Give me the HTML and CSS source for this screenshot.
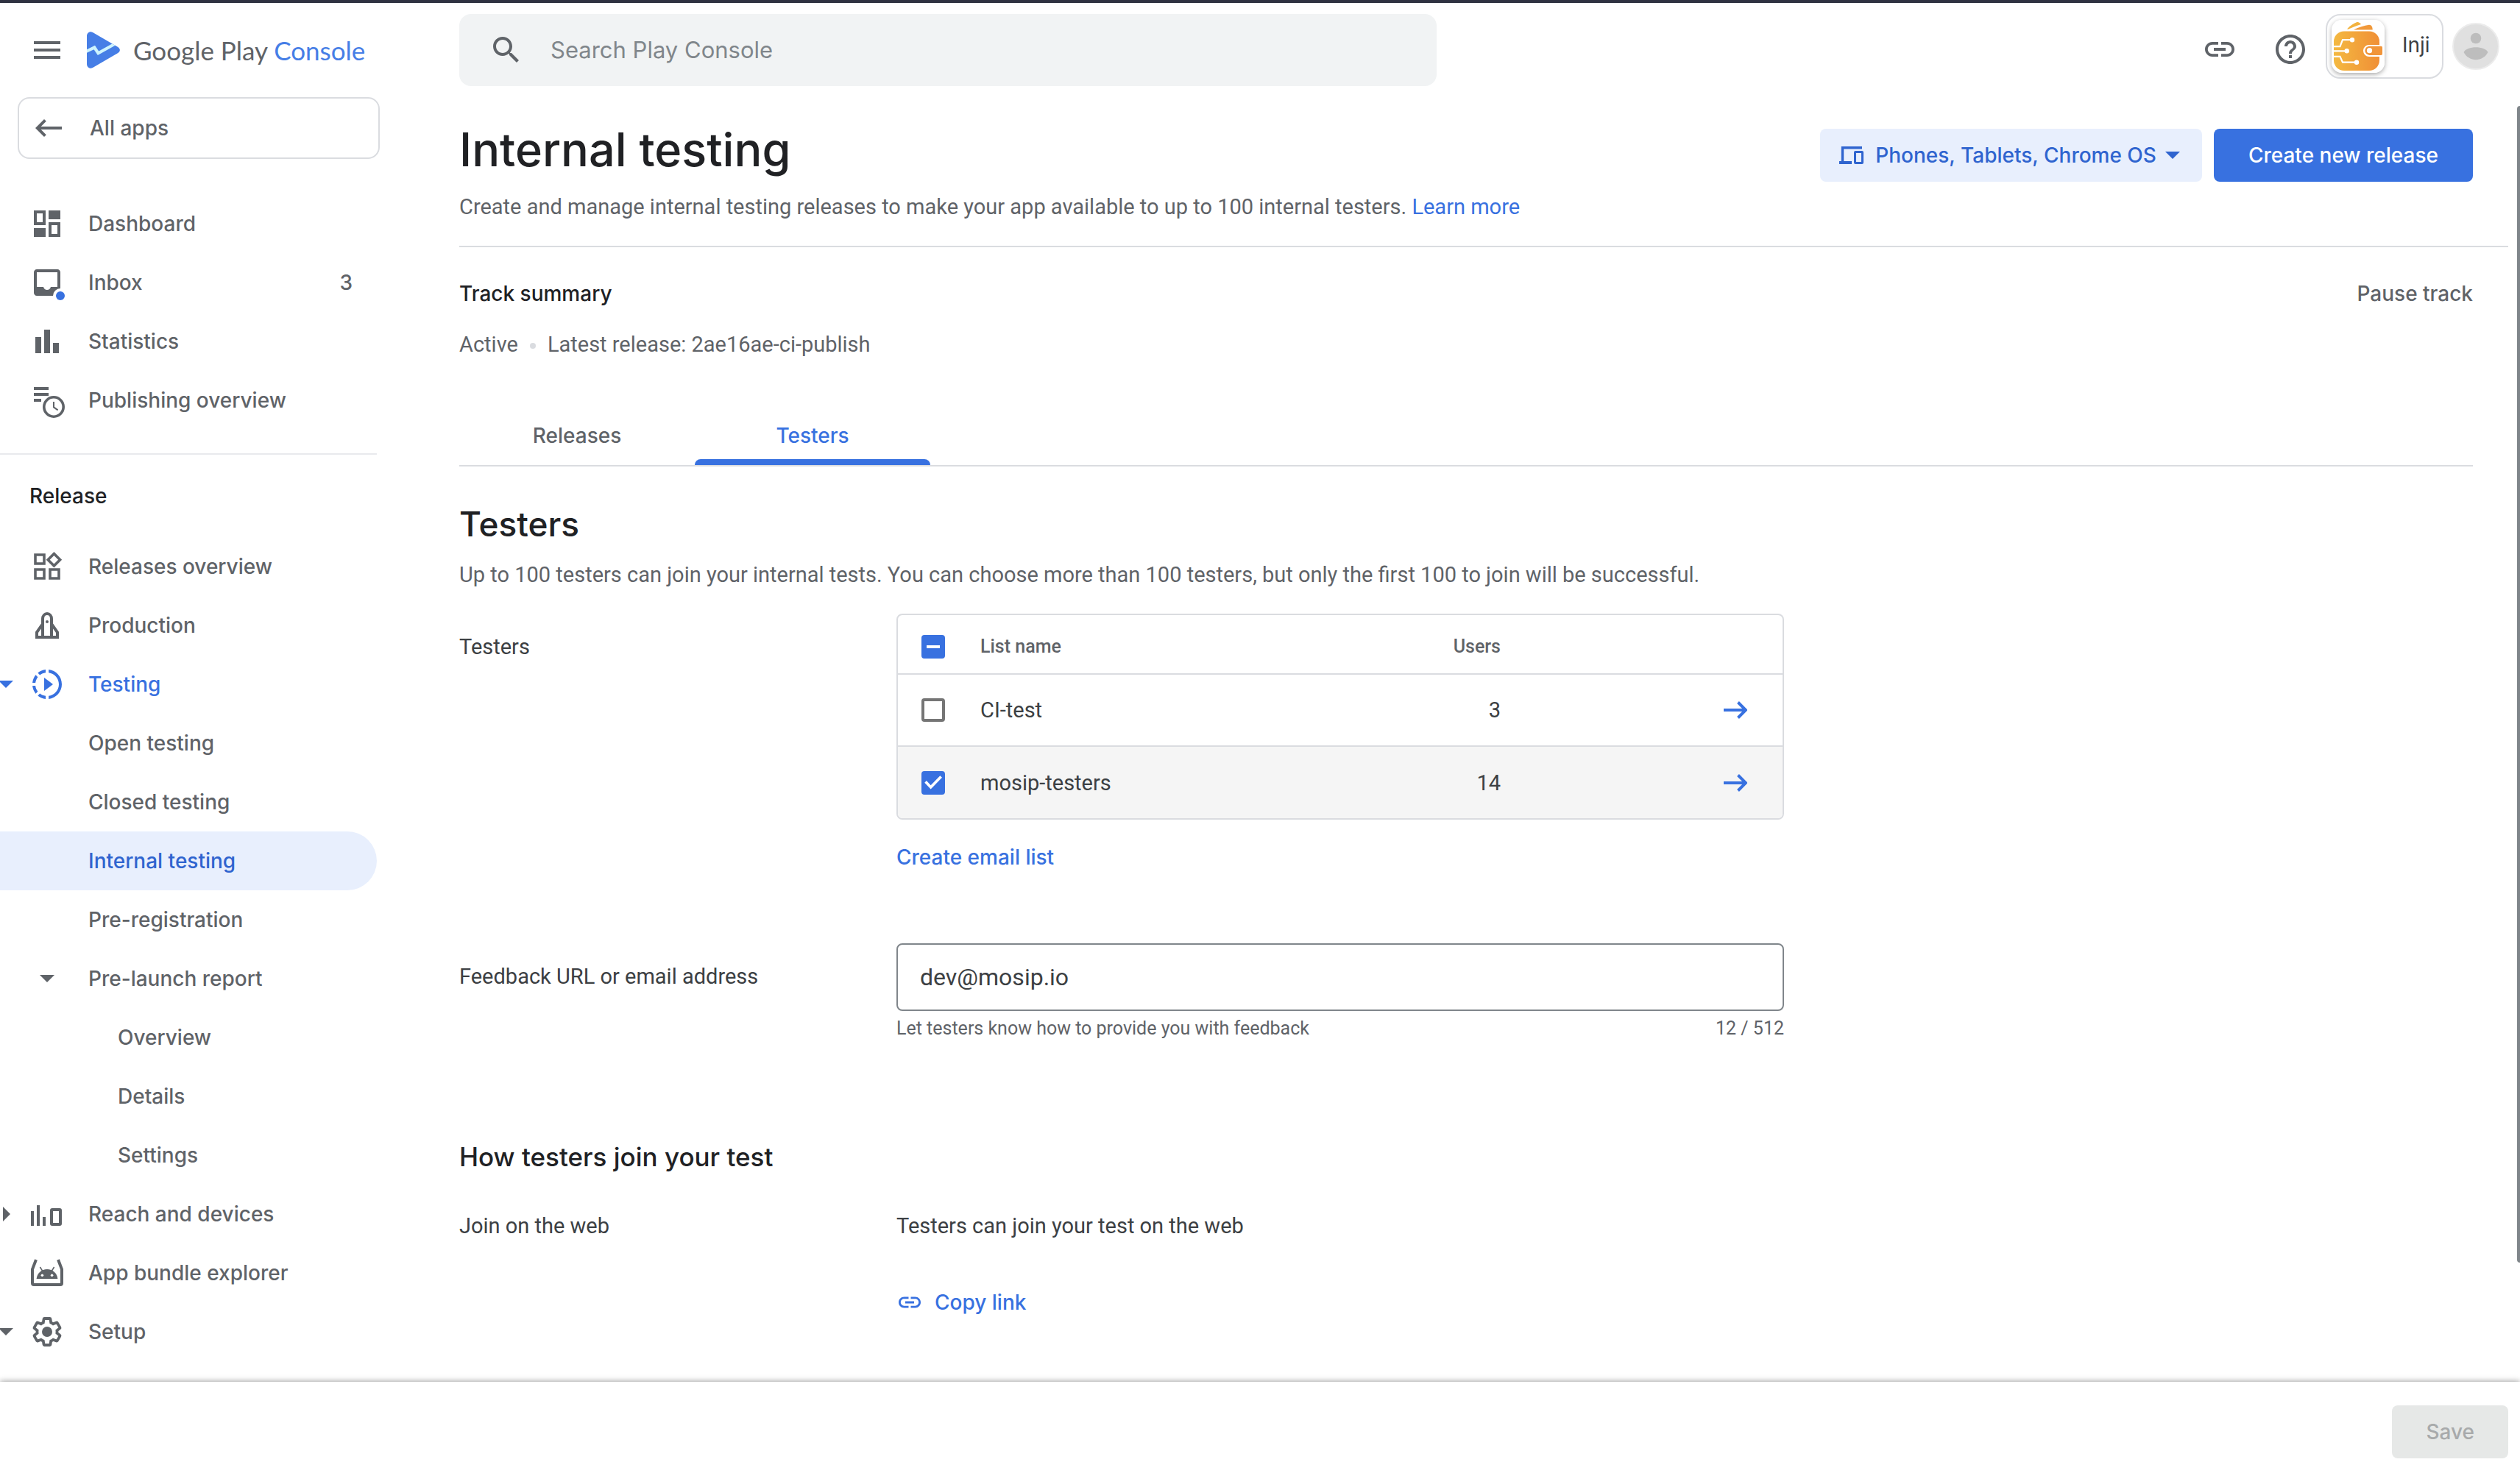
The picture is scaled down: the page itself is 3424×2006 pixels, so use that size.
FILE: index.html
```html
<!DOCTYPE html>
<html lang="en">
<head>
<meta charset="utf-8">
<meta name="viewport" content="width=device-width, initial-scale=1">
<title>Internal testing | Google Play Console</title>
<link rel="stylesheet" href="styles.css">
</head>
<body>
<svg class="sprite" aria-hidden="true">
  <symbol id="link" viewBox="0 0 24 24"><path d="M3.9 12c0-1.71 1.39-3.1 3.1-3.1h4V7H7c-2.76 0-5 2.24-5 5s2.24 5 5 5h4v-1.9H7c-1.71 0-3.1-1.39-3.1-3.1zM8 13h8v-2H8v2zm9-6h-4v1.9h4c1.71 0 3.100 1.390 3.100 3.100s-1.390 3.100-3.100 3.100h-4V17h4c2.760 0 5-2.240 5-5s-2.240-5-5-5z"/></symbol>
  <symbol id="down" viewBox="0 0 20 20"><path d="M0 5h20L10 15z"/></symbol>
  <symbol id="right" viewBox="0 0 20 20"><path d="M6 0l10 10L6 20z"/></symbol>
  <symbol id="forward" viewBox="0 0 32 24"><path d="M0 12h29M19.500 1.500L30 12 19.500 22.500" fill="none" stroke="currentColor" stroke-width="4"/></symbol>
</svg>

<div class="top-strip"></div>

<header class="header">
  <div class="brand">
    <button class="icon-button" type="button" aria-label="Menu">
      <svg class="icon" viewBox="0 0 24 24"><path d="M3 6h18v2H3zm0 5h18v2H3zm0 5h18v2H3z"/></svg>
    </button>
    <a class="logo" href="#">
      <svg class="logo-mark" viewBox="0 0 45 50">
        <clipPath id="mark"><path d="M0 6C0 1.500 4 -1.200 8 1L41.500 20.400C46 23 46 27 41.500 29.600L8 49C4 51.200 0 48.500 0 44z"/></clipPath>
        <g clip-path="url(#mark)"><path fill="#467ee6" d="M0 0h45v50H0z"/><path d="M-2 27.500L10.300 21.500 15.500 29.300 42 14.500" fill="none" stroke="#cdf3fd" stroke-width="4.200"/></g>
      </svg>
      <span class="logo-text">Google Play <span class="logo-accent">Console</span></span>
    </a>
  </div>
  <label class="search">
    <svg class="icon" viewBox="0 0 24 24" aria-hidden="true"><path d="M15.500 14h-.79l-.28-.27C15.410 12.590 16 11.110 16 9.500 16 5.910 13.090 3 9.500 3S3 5.910 3 9.500 5.910 16 9.500 16c1.610 0 3.090-.59 4.230-1.570l.27.28v.79l5 4.990L20.490 19l-4.990-5zm-6 0C7.010 14 5 11.990 5 9.500S7.010 5 9.500 5 14 7.010 14 9.500 11.990 14 9.500 14z"/></svg>
    <input class="search-input" type="search" placeholder="Search Play Console" aria-label="Search Play Console">
  </label>
  <div class="account">
    <div class="account-tools">
      <button class="icon-button" type="button" aria-label="Copy page link"><svg class="icon"><use href="#link"/></svg></button>
      <button class="icon-button" type="button" aria-label="Help"><svg class="icon" viewBox="0 0 24 24"><path d="M11 18h2v-2h-2v2zm1-16C6.480 2 2 6.480 2 12s4.480 10 10 10 10-4.480 10-10S17.520 2 12 2zm0 18c-4.410 0-8-3.590-8-8s3.590-8 8-8 8 3.590 8 8-3.590 8-8 8zm0-14c-2.210 0-4 1.790-4 4h2c0-1.100.9-2 2-2s2 .9 2 2c0 2-3 1.750-3 5h2c0-2.250 3-2.500 3-5 0-2.210-1.790-4-4-4z"/></svg></button>
    </div>
    <button class="app-chip" type="button">
      <svg class="app-tile" viewBox="0 0 72 72">
        <defs><linearGradient id="amber"><stop offset="0" stop-color="#f4b941"/><stop offset="1" stop-color="#f08f36"/></linearGradient></defs>
        <rect width="72" height="72" fill="#fff"/>
        <path fill="#f3b23e" d="M21 12.500C25 8 30 5 34 3.300c2.500-.8 4.500 1 6 2.700C33 8 27 11 22.500 12.800z"/>
        <path fill="#f1993a" d="M30 13.400C37 10 44 8 51 6.800c3.500 0 4.500 3 4.700 6.600z"/>
        <rect x="3" y="15.500" width="62" height="53.500" rx="14" fill="url(#amber)"/>
        <path fill="#fff" d="M69 34H51a7.800 7.800 0 0 0 0 16h18z"/>
        <path fill="#f1953a" d="M67 35.700H51.500a6 6 0 0 0 0 12.200H67c1.500 0 2-.8 2-2V37.700c0-1.200-.5-2-2-2z"/>
        <path d="M2 36.200h9.500L15 27.200h12M2 42.300h17M2 49.800h9.500L15 57.700h18" fill="none" stroke="#fff" stroke-width="2.200"/>
        <g fill="#fff"><circle cx="28" cy="27.200" r="3.200"/><circle cx="20.700" cy="42.300" r="3.200"/><circle cx="34" cy="57.700" r="3.200"/><circle cx="51.500" cy="41.700" r="3.600"/></g>
      </svg>
      <span class="app-name">Inji</span>
    </button>
    <button class="avatar" type="button" aria-label="Account">
      <svg class="avatar-art" viewBox="0 0 64 64"><circle cx="32" cy="32" r="31" fill="#e0e0e0" stroke="#ececec" stroke-width="2"/><circle cx="32" cy="21" r="7.300" fill="#bdbdbd"/><path fill="#bdbdbd" d="M15.500 40c4-9 29-9 33 0-7 13.500-26 13.500-33 0z"/></svg>
    </button>
  </div>
</header>

<div class="shell">
  <nav class="sidebar" aria-label="Main">
    <a class="all-apps" href="#">
      <svg class="icon" viewBox="0 0 24 24"><path d="M22 11H7.830l3.580-3.590L10 6l-6 6 6 6 1.410-1.410L7.830 13H22z"/></svg>
      <span>All apps</span>
    </a>

    <a class="item" href="#"><svg class="icon" viewBox="0 0 24 24"><path fill-rule="evenodd" d="M3 3h8v10H3zM5 5v6h4V5zM13 3h8v6h-8zM3 15h8v6H3zM13 11h8v10h-8zM15 13v6h4v-6z"/></svg><span class="label">Dashboard</span></a>
    <a class="item" href="#"><svg class="icon" viewBox="0 0 24 24"><path d="M19 3H5c-1.100 0-2 .9-2 2v14c0 1.100.9 2 2 2h14c1.100 0 2-.9 2-2V5c0-1.100-.9-2-2-2zm0 12h-4.500c-.4 1.300-1.300 2-2.500 2s-2.100-.7-2.500-2H5V5h14v10z"/><circle cx="21" cy="21" r="5" fill="#fff"/><circle cx="21" cy="21" r="3" fill="#3871e0"/></svg><span class="label">Inbox</span><span class="count">3</span></a>
    <a class="item" href="#"><svg class="icon" viewBox="0 0 24 24"><path d="M4 9h4v11H4zM10 4h4v16h-4zM16 13h4v7h-4z"/></svg><span class="label">Statistics</span></a>
    <a class="item" href="#"><svg class="icon" viewBox="0 0 24 24"><path d="M3 3h10v2H3zM3 7h10v2H3zM3 11h5v2H3z"/><circle cx="16.500" cy="16.500" r="8" fill="#fff"/><path d="M13 7v2H3V7z"/><circle cx="16.500" cy="16.500" r="6.600" fill="#fff" stroke="currentColor" stroke-width="1.800"/><path d="M16.500 13v3.700l2.800 2" fill="none" stroke="currentColor"/></svg><span class="label">Publishing overview</span></a>

    <h2 class="section">Release</h2>

    <a class="item" href="#"><svg class="icon" viewBox="0 0 24 24"><path d="M4 4h6v6H4zM4 14h6v6H4zM14 14h6v6h-6zM16.700 3.300l4.100 4.100-4.100 4.100-4.100-4.100z" fill="none" stroke="currentColor" stroke-width="1.800"/></svg><span class="label">Releases overview</span></a>
    <a class="item" href="#"><svg class="icon" viewBox="0 0 24 24"><path d="M9 20V7.500C9 5.500 10.300 4 12 4s3 1.500 3 3.500V20M9 11l-4 5.700V20h14v-3.300L15 11" fill="none" stroke="currentColor" stroke-width="2"/><circle cx="12" cy="9.500" r="1"/></svg><span class="label">Production</span></a>
    <a class="item item-active" href="#"><svg class="caret"><use href="#down"/></svg><svg class="icon" viewBox="0 0 24 24"><path d="M13.050 9.790L10 7.500v9l3.050-2.290L16 12zM11 4.070V2.050c-2.010.2-3.840 1-5.320 2.210L7.100 5.690c1.110-.86 2.440-1.440 3.900-1.620zM5.690 7.100L4.260 5.680C3.050 7.160 2.250 8.990 2.050 11h2.020c.18-1.460.76-2.790 1.620-3.900zM4.070 13H2.050c.2 2.010 1 3.840 2.210 5.320l1.430-1.430c-.86-1.100-1.440-2.430-1.620-3.890zM5.680 19.740C7.160 20.950 9 21.750 11 21.950v-2.020c-1.460-.18-2.790-.76-3.900-1.620l-1.420 1.430zM22 12c0 5.160-3.920 9.420-8.950 9.950v-2.020C16.970 19.410 20 16.050 20 12s-3.030-7.410-6.950-7.930V2.050C18.080 2.580 22 6.840 22 12z"/></svg><span class="label">Testing</span></a>
    <a class="item" href="#"><span class="label">Open testing</span></a>
    <a class="item" href="#"><span class="label">Closed testing</span></a>
    <a class="item item-current" href="#" aria-current="page"><span class="label">Internal testing</span></a>
    <a class="item" href="#"><span class="label">Pre-registration</span></a>
    <a class="item" href="#"><svg class="caret caret-inner"><use href="#down"/></svg><span class="label">Pre-launch report</span></a>
    <a class="item item-nested" href="#"><span class="label">Overview</span></a>
    <a class="item item-nested" href="#"><span class="label">Details</span></a>
    <a class="item item-nested" href="#"><span class="label">Settings</span></a>
    <a class="item" href="#"><svg class="caret"><use href="#right"/></svg><svg class="icon" viewBox="0 0 24 24"><path d="M1 10h2v10H1zM5 6h2v14H5zM9 14h2v6H9z"/><rect x="15" y="9" width="6" height="10" rx=".5" fill="none" stroke="currentColor" stroke-width="2"/></svg><span class="label">Reach and devices</span></a>
    <a class="item" href="#"><svg class="icon" viewBox="0 0 24 24"><path d="M4.500 3L2 9.500V19a1 1 0 0 0 1 1h18a1 1 0 0 0 1-1V9.500L19.500 3" fill="none" stroke="currentColor" stroke-width="2"/><path d="M4.800 16c.4-3.800 3.400-6.500 7.200-6.500s6.800 2.700 7.200 6.500z"/><path d="M7.200 8l1.600 2.600M16.800 8l-1.600 2.600" stroke="currentColor" stroke-width=".8"/><g fill="#fff"><circle cx="8.700" cy="13.600" r=".9"/><circle cx="15.300" cy="13.600" r=".9"/></g></svg><span class="label">App bundle explorer</span></a>
    <a class="item" href="#"><svg class="caret"><use href="#down"/></svg><svg class="icon" viewBox="0 0 24 24"><g transform="translate(1.200 1.200) scale(.9)"><path fill="none" stroke="currentColor" stroke-width="2.100" d="M19.430 12.980c.04-.32.07-.64.07-.98 0-.34-.03-.66-.07-.98l2.110-1.650c.19-.15.24-.42.12-.64l-2-3.460c-.09-.16-.26-.25-.44-.25-.06 0-.12.01-.17.03l-2.490 1c-.52-.4-1.080-.73-1.690-.98l-.38-2.650C14.460 2.180 14.250 2 14 2h-4c-.25 0-.46.18-.49.42l-.38 2.650c-.61.25-1.170.59-1.690.98l-2.490-1c-.06-.02-.12-.03-.18-.03-.17 0-.34.09-.43.25l-2 3.460c-.13.22-.07.49.12.64l2.110 1.650c-.04.32-.07.65-.07.98 0 .33.03.66.07.98l-2.110 1.650c-.19.15-.24.42-.12.64l2 3.460c.09.16.26.25.44.25.06 0 .12-.01.17-.03l2.490-1c.52.4 1.080.73 1.690.98l.38 2.650c.03.24.24.42.49.42h4c.25 0 .46-.18.49-.42l.38-2.650c.61-.25 1.170-.59 1.690-.98l2.490 1c.06.02.12.03.18.03.17 0 .34-.09.43-.25l2-3.460c.12-.22.07-.49-.12-.64l-2.110-1.650z"/></g><circle cx="12" cy="12" r="3.500"/></svg><span class="label">Setup</span></a>
  </nav>

  <main class="main">
    <div class="title-row">
      <div>
        <h1 class="title">Internal testing</h1>
        <p class="text intro">Create and manage internal testing releases to make your app available to up to 100 internal testers. <a class="link" href="#">Learn more</a></p>
      </div>
      <div class="actions">
        <button class="button button-tonal" type="button" aria-haspopup="listbox">
          <svg class="devices" viewBox="0 0 33 24"><path d="M31 1.700H4.500V20" fill="none" stroke="currentColor" stroke-width="3.400"/><path d="M0 20h17v4H0z"/><rect x="21.500" y="7.500" width="10" height="15" rx=".5" fill="none" stroke="currentColor" stroke-width="3"/></svg>
          <span>Phones, Tablets, Chrome OS</span>
          <svg class="menu-caret"><use href="#down"/></svg>
        </button>
        <button class="button button-primary" type="button">Create new release</button>
      </div>
    </div>

    <div class="body">
      <div class="track-row">
        <h2 class="track-title">Track summary</h2>
        <button class="text-button" type="button">Pause track</button>
      </div>
      <p class="text status"><span>Active</span><span class="dot"></span><span>Latest release: 2ae16ae-ci-publish</span></p>

      <div class="tabs" role="tablist">
        <button class="tab" type="button" role="tab" aria-selected="false">Releases</button>
        <button class="tab tab-selected" type="button" role="tab" aria-selected="true">Testers</button>
      </div>

      <h2 class="subtitle">Testers</h2>
      <p class="text">Up to 100 testers can join your internal tests. You can choose more than 100 testers, but only the first 100 to join will be successful.</p>

      <section class="form-row lists-row">
        <div class="form-label">Testers</div>
        <div>
          <div class="table-frame">
            <table class="lists">
              <thead>
                <tr><th class="col-check"><input class="check check-mixed" type="checkbox" aria-label="Select all lists"></th><th class="col-name">List name</th><th class="col-users">Users</th><th class="col-go"></th></tr>
              </thead>
              <tbody>
                <tr><td><input class="check" type="checkbox" aria-label="CI-test"></td><td>CI-test</td><td class="col-users">3</td><td class="col-go"><a class="go" href="#" aria-label="Open CI-test"><svg class="arrow"><use href="#forward"/></svg></a></td></tr>
                <tr class="row-selected"><td><input class="check" type="checkbox" aria-label="mosip-testers" checked></td><td>mosip-testers</td><td class="col-users">14</td><td class="col-go"><a class="go" href="#" aria-label="Open mosip-testers"><svg class="arrow"><use href="#forward"/></svg></a></td></tr>
              </tbody>
            </table>
          </div>
          <button class="text-button blue create-list" type="button">Create email list</button>
        </div>
      </section>

      <section class="form-row feedback-row">
        <label class="form-label" for="feedback">Feedback URL or email address</label>
        <div>
          <input class="field" id="feedback" type="text" value="dev@mosip.io" aria-describedby="feedback-hint">
          <div class="hint"><span id="feedback-hint">Let testers know how to provide you with feedback</span><span>12 / 512</span></div>
        </div>
      </section>

      <h3 class="join-title">How testers join your test</h3>
      <section class="form-row join-row">
        <div>Join on the web</div>
        <div>
          <p class="join-text">Testers can join your test on the web</p>
          <button class="text-button blue copy" type="button"><svg class="copy-icon"><use href="#link"/></svg><span>Copy link</span></button>
        </div>
      </section>
    </div>
  </main>
</div>

<footer class="footer"><button class="button button-save" type="button" disabled>Save</button></footer>
<div class="scroll-thumb"></div>
</body>
</html>
```

FILE: styles.css
```css
:root {
  --blue: #3871e0;
  --blue-dark: #2f64cf;
  --blue-tint: #e8effd;
  --ink: #202124;
  --body: #3c4043;
  --grey: #5f6368;
  --line: #dadce0;
  --sans: Inter, "Open Sans", sans-serif;
  --text: Roboto, "Liberation Sans", sans-serif;
}

* { box-sizing: border-box; }

body {
  margin: 0;
  min-height: 100vh;
  display: flex;
  flex-direction: column;
  background: #fff;
  color: var(--body);
  font: 400 29px/40px var(--text);
}

h1, h2, h3, p { margin: 0; }
a { color: inherit; text-decoration: none; }
button { padding: 0; border: 0; background: none; color: inherit; font: 500 28px/40px var(--sans); }
svg { display: block; flex: none; fill: currentColor; }

.sprite { position: absolute; width: 0; height: 0; }
.icon { width: 48px; height: 48px; }
.icon-button { color: var(--grey); }
.top-strip { height: 4px; background: #2f3241; }

/* Header */
.header {
  display: grid;
  grid-template-columns: 624px minmax(0, 1328px) 1fr;
  align-items: start;
  padding: 15px 28px 15px 0;
}
.brand { display: flex; align-items: center; height: 98px; padding-left: 40px; gap: 30px; }
.logo { display: flex; align-items: center; gap: 18px; }
.logo-mark { width: 45px; height: 50px; }
.logo-text { font: 400 35px/48px Lato, sans-serif; color: var(--grey); }
.logo-accent { color: #467ee6; }

.search {
  display: flex;
  align-items: center;
  height: 98px;
  padding: 0 40px;
  gap: 36px;
  border-radius: 16px;
  background: #f1f3f4;
  color: var(--grey);
}
.search-input {
  flex: 1;
  min-width: 0;
  padding: 0;
  border: 0;
  outline: 0;
  background: none;
  color: var(--body);
  font: 400 31px/48px var(--sans);
}
.search-input::placeholder { color: #80868b; opacity: 1; }

.account { display: flex; justify-content: flex-end; align-items: center; height: 88px; }
.account-tools { display: flex; gap: 48px; padding-top: 8px; margin-right: 24px; }
.app-chip {
  display: flex;
  gap: 24px;
  width: 160px;
  height: 88px;
  padding: 6px;
  border: 2px solid var(--line);
  border-radius: 20px;
  margin-right: 12px;
}
.app-tile { width: 72px; height: 72px; border-radius: 14px; box-shadow: 0 2px 6px rgba(0, 0, 0, .35); }
.app-name { padding-top: 14px; font-weight: 400; color: var(--body); }
.avatar-art { width: 64px; height: 64px; }

/* Layout */
.shell { display: grid; grid-template-columns: 624px minmax(0, 1fr); }

/* Sidebar */
.sidebar { padding-bottom: 28px; color: var(--grey); font: 500 28px/40px var(--sans); }
.all-apps {
  display: flex;
  align-items: center;
  gap: 34px;
  width: 492px;
  height: 84px;
  margin: 0 0 48px 24px;
  padding-left: 14px;
  border: 2px solid var(--line);
  border-radius: 16px;
}
.item {
  display: grid;
  grid-template-columns: 40px 48px 32px 1fr auto;
  align-items: center;
  width: 512px;
  height: 80px;
  padding-right: 33px;
}
.item > * { grid-row: 1; }
.item .icon { grid-column: 2; }
.caret { grid-column: 1; width: 20px; height: 20px; margin-left: -2px; }
.caret-inner { grid-column: 2; margin-left: 0; justify-self: center; }
.label { grid-column: 4; white-space: nowrap; }
.count { grid-column: 5; }
.item-nested { padding-left: 40px; }
.item-active { color: var(--blue); }
.item-current { border-radius: 0 40px 40px 0; background: var(--blue-tint); color: var(--blue-dark); }
.section {
  width: 512px;
  margin-top: 32px;
  padding: 36px 40px;
  border-top: 2px solid #e8eaed;
  color: var(--ink);
  font: 500 28px/40px var(--sans);
}

/* Page content */
.title-row {
  display: flex;
  justify-content: space-between;
  margin-right: 16px;
  padding: 35px 48px 33px 0;
  border-bottom: 2px solid var(--line);
}
.title { color: var(--ink); font: 500 63px/72px var(--sans); }
.text { color: var(--grey); }
.intro { margin-top: 22px; }
.link { color: var(--blue); }
.actions { display: flex; gap: 16px; padding-top: 8px; }
.button { height: 72px; border-radius: 8px; white-space: nowrap; }
.button-tonal {
  display: flex;
  align-items: center;
  padding: 0 30px 0 26px;
  background: var(--blue-tint);
  color: var(--blue-dark);
}
.devices { width: 33px; height: 24px; margin-right: 16px; }
.menu-caret { width: 20px; height: 20px; margin-left: 12px; }
.button-primary { padding: 0 47px; background: var(--blue); color: #fff; }

.body { padding: 43px 64px 0 0; }
.track-row { display: flex; justify-content: space-between; color: var(--grey); }
.track-title { color: var(--ink); font: 500 28px/40px var(--sans); }
.status { display: flex; align-items: center; margin-top: 29px; }
.dot { width: 8px; height: 8px; margin: 4px 16px 0; border-radius: 50%; background: var(--line); }

.tabs { display: flex; margin-top: 64px; border-bottom: 2px solid var(--line); }
.tab { position: relative; width: 320px; height: 80px; color: var(--grey); }
.tab-selected { color: var(--blue); }
.tab-selected::after {
  content: "";
  position: absolute;
  inset: auto 0 0;
  height: 8px;
  border-radius: 8px 8px 0 0;
  background: var(--blue);
}

.subtitle { margin: 50px 0 21px; color: var(--ink); font: 500 46px/56px var(--sans); }

.form-row { display: grid; grid-template-columns: 594px minmax(0, 1206px); }
.form-label { padding-top: 25px; }
.lists-row { margin-top: 33px; }
.table-frame { border: 2px solid var(--line); border-radius: 8px; overflow: hidden; }
.lists { width: 100%; border-collapse: collapse; table-layout: fixed; }
.lists th { height: 80px; padding: 6px 0 0; color: var(--grey); font-size: 25px; font-weight: 500; text-align: left; }
.lists td { height: 98px; padding: 0; border-top: 2px solid var(--line); }
.lists .col-check { width: 112px; }
.lists .col-users { width: 307px; text-align: right; }
.lists .col-go { width: 383px; padding-right: 48px; }
.lists td:first-child, .lists th:first-child { padding-left: 32px; }
.row-selected { background: #f5f5f5; }
.go { display: block; width: 32px; margin-left: auto; color: var(--blue); }
.arrow { width: 32px; height: 24px; }

.check {
  appearance: none;
  display: grid;
  width: 32px;
  height: 32px;
  margin: 0;
  border: 4px solid #757575;
  border-radius: 4px;
}
.check:checked, .check-mixed { border-color: var(--blue); background: var(--blue); }
.check:checked::after {
  content: "";
  background: #fff;
  clip-path: polygon(1% 51%, 12% 40%, 36% 66%, 89% 11%, 100% 22%, 36% 88%);
}
.check-mixed::after { content: ""; align-self: center; height: 4px; margin: 0 3px; background: #fff; }

.text-button { display: block; white-space: nowrap; }
.blue { color: var(--blue); }
.create-list { margin-top: 31px; }

.feedback-row { margin-top: 97px; }
.field {
  display: block;
  width: 100%;
  height: 92px;
  padding: 0 30px;
  border: 2px solid #80868b;
  border-radius: 8px;
  background: #fff;
  color: var(--body);
  font: 400 32px/48px var(--text);
}
.hint { display: flex; justify-content: space-between; margin-top: 8px; color: var(--grey); font-size: 25px; line-height: 32px; }

.join-title { margin: 134px 0 50px; color: var(--ink); font: 500 35px/48px var(--sans); }
.copy { display: flex; align-items: center; gap: 16px; margin-top: 64px; }
.copy-icon { width: 36px; height: 36px; }

/* Save bar */
.footer {
  display: flex;
  justify-content: flex-end;
  align-items: flex-start;
  height: 128px;
  margin-top: auto;
  padding: 32px 16px 0;
  background: #fff;
  box-shadow: 0 0 8px rgba(0, 0, 0, .45);
}
.button-save { padding: 0 46px; background: #e6e8e7; color: #a8aaab; }

.scroll-thumb {
  position: fixed;
  top: 144px;
  right: 0;
  bottom: 290px;
  width: 4px;
  border-radius: 4px 0 0 4px;
  background: #80868b;
}
```
